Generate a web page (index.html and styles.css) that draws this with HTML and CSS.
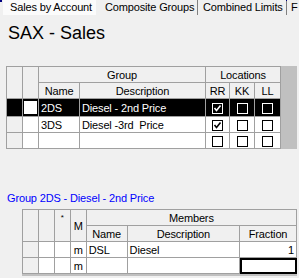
FILE: index.html
```html
<!DOCTYPE html>
<html lang="en">
<head>
    <meta charset="UTF-8">
    <title>Composite Groups</title>
    <link rel="stylesheet" href="styles.css">
</head>
<body>
    <div class="tabs">
        <div class="tab hot">Sales by Account</div>
        <div class="tab composite">Composite Groups</div>
        <div class="tab limits">Combined Limits</div>
        <div class="tab more">F</div>
    </div>

    <h1 class="title">SAX - Sales</h1>

    <div class="grid groups">
        <table>
            <colgroup>
                <col style="width:16px"><col style="width:16px"><col style="width:41px">
                <col style="width:126px"><col style="width:24px"><col style="width:25px"><col style="width:26px">
            </colgroup>
            <tr class="head">
                <td class="fixed" rowspan="2"></td>
                <td class="fixed" rowspan="2"></td>
                <td colspan="2">Group</td>
                <td colspan="3">Locations</td>
            </tr>
            <tr class="head">
                <td>Name</td>
                <td>Description</td>
                <td>RR</td>
                <td>KK</td>
                <td>LL</td>
            </tr>
            <tr class="selected">
                <td class="fixed"></td>
                <td class="cur"><span class="box"></span></td>
                <td>2DS</td>
                <td>Diesel - 2nd Price</td>
                <td class="chk"><span class="cb"><svg viewBox="0 0 9 9"><polyline points="1.5,4 3.5,6.5 7.5,1.5"/></svg></span></td>
                <td class="chk"><span class="cb"></span></td>
                <td class="chk"><span class="cb"></span></td>
            </tr>
            <tr>
                <td class="fixed"></td>
                <td></td>
                <td>3DS</td>
                <td>Diesel -3rd&nbsp; Price</td>
                <td class="chk"><span class="cb"><svg viewBox="0 0 9 9"><polyline points="1.5,4 3.5,6.5 7.5,1.5"/></svg></span></td>
                <td class="chk"><span class="cb"></span></td>
                <td class="chk"><span class="cb"></span></td>
            </tr>
            <tr>
                <td class="fixed"></td>
                <td></td>
                <td></td>
                <td></td>
                <td class="chk"><span class="cb"></span></td>
                <td class="chk"><span class="cb"></span></td>
                <td class="chk"><span class="cb"></span></td>
            </tr>
        </table>
    </div>

    <p class="caption">Group 2DS - Diesel - 2nd Price</p>

    <div class="grid members">
        <table>
            <colgroup>
                <col style="width:16px"><col style="width:16px"><col style="width:16px"><col style="width:16px">
                <col style="width:41px"><col style="width:113px"><col style="width:57px">
            </colgroup>
            <tr class="head">
                <td class="fixed" rowspan="2"></td>
                <td class="fixed" rowspan="2"></td>
                <td rowspan="2" class="star">*</td>
                <td rowspan="2">M</td>
                <td colspan="3">Members</td>
            </tr>
            <tr class="head">
                <td>Name</td>
                <td>Description</td>
                <td>Fraction</td>
            </tr>
            <tr>
                <td class="fixed"></td>
                <td></td>
                <td></td>
                <td class="mid">m</td>
                <td>DSL</td>
                <td>Diesel</td>
                <td class="num">1</td>
            </tr>
            <tr>
                <td class="fixed"></td>
                <td></td>
                <td></td>
                <td class="mid">m</td>
                <td></td>
                <td></td>
                <td class="focus"></td>
            </tr>
        </table>
    </div>
</body>
</html>
```

FILE: styles.css
```css
body {
    margin: 0;
    background-color: #f0f0f0;
    font-family: "Liberation Sans", Arial, sans-serif;
    font-size: 11px;
    letter-spacing: -0.15px;
    color: #000;
    width: 299px;
    height: 278px;
    overflow: hidden;
}

/* tab strip */
.tabs {
    display: flex;
    height: 16px;
}

.tabs::before {
    content: "";
    width: 2px;
    height: 2px;
    background-color: #000080;
    flex: none;
}

.tab {
    box-sizing: border-box;
    line-height: 15px;
    white-space: nowrap;
    overflow: hidden;
    flex: none;
}

.tab.hot {
    background-color: #fbfbfb;
    margin-left: 1px;
    width: 93px;
    height: 15px;
    padding-left: 7px;
}

.tab.composite {
    width: 102px;
    padding-left: 9px;
    border-right: 1px solid #808080;
    height: 15px;
}

.tab.limits {
    width: 89px;
    padding-left: 5px;
    height: 15px;
    border-right: 1px solid #808080;
    border-image: linear-gradient(#000080 0, #000080 2px, #808080 2px) 1;
}

.tab.more {
    flex: 1;
    padding-left: 4px;
}

.title {
    margin: 7px 0 0 8px;
    font-size: 18px;
    font-weight: normal;
    line-height: 20px;
    letter-spacing: 0;
}

/* grids */
.grid {
    background-color: #c0c0c0;
    margin-right: 2px;
    overflow: hidden;
}

.groups {
    margin-top: 23px;
    margin-left: 6px;
    height: 83px;
}

.members {
    margin-left: 22px;
    height: 67px;
}

table {
    border-collapse: collapse;
    table-layout: fixed;
    background-color: #fff;
}

td {
    border: 1px solid #a0a0a0;
    height: 15px;
    padding: 0 2px;
    line-height: 14px;
    white-space: nowrap;
    overflow: hidden;
}

.head td {
    background-color: #f0f0f0;
    text-align: center;
    padding: 0;
}

td.fixed {
    background-color: #f0f0f0;
}

.selected td {
    background-color: #000;
    color: #fff;
}

td.cur {
    padding: 1px;
}

.box {
    display: block;
    height: 13px;
    background-color: #fff;
}

td.chk {
    padding: 0;
    text-align: center;
}

.cb {
    display: inline-block;
    width: 9px;
    height: 9px;
    border: 1px solid #000;
    background-color: #fff;
    vertical-align: middle;
}

.cb svg {
    display: block;
    width: 9px;
    height: 9px;
    fill: none;
    stroke: #000;
    stroke-width: 1.6;
}

.selected .cb {
    border-color: #fff;
    background-color: #000;
}

.selected .cb svg {
    stroke: #fff;
}

.caption {
    margin: 43px 0 4px 7px;
    color: #0000ff;
    line-height: 13px;
}

td.star {
    font-size: 8px;
    vertical-align: top;
    line-height: 16px;
}

td.mid {
    text-align: center;
}

td.num {
    text-align: right;
}

td.focus {
    outline: 2px solid #000;
    outline-offset: -2px;
}
```
